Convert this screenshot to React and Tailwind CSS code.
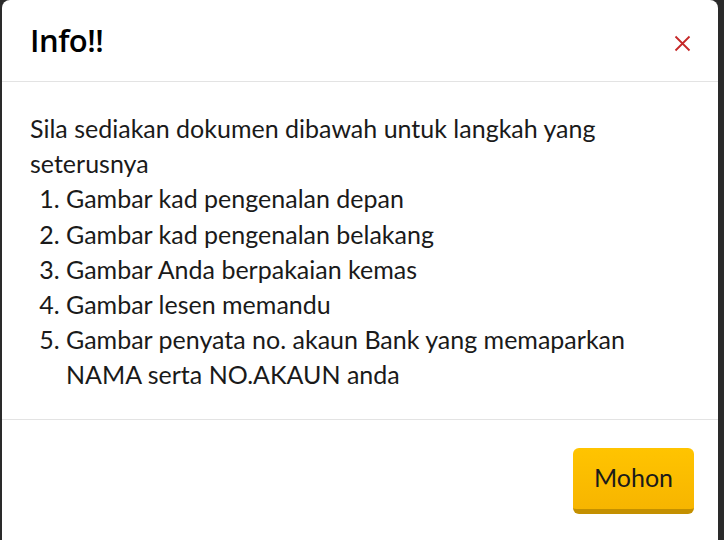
const items = [
  "Gambar kad pengenalan depan",
  "Gambar kad pengenalan belakang",
  "Gambar Anda berpakaian kemas",
  "Gambar lesen memandu",
  "Gambar penyata no. akaun Bank yang memaparkan NAMA serta NO.AKAUN anda",
];

export default function App() {
  return (
    <div className="h-[540px] w-[724px] overflow-hidden bg-[#2a2a2a] pl-[2px] pr-[6px]">
      <div className="h-[560px] rounded-lg bg-white text-[#1a1a1a] font-['Lato',sans-serif]">
        <div className="flex h-[82px] items-center justify-between border-b border-[#e3e3e3] pl-[28px] pr-[27px]">
          <h1 className="font-['Open_Sans',sans-serif] text-[31px] font-semibold tracking-[-0.5px] text-black">
            Info!!
          </h1>
          <button className="mt-[6px] text-[#c62828]">
            <svg width="17" height="17" viewBox="0 0 17 17" fill="none" stroke="currentColor" strokeWidth="1.8">
              <path d="M1.5 1.5L15.5 15.5M15.5 1.5L1.5 15.5" />
            </svg>
          </button>
        </div>
        <div className="border-b border-[#e3e3e3] pl-[28px] pr-6 pt-[29px] text-[25px] leading-[35.2px]">
          <p className="w-[600px]">Sila sediakan dokumen dibawah untuk langkah yang seterusnya</p>
          <ol className="list-decimal pl-[36px] pb-[26px]">
            {items.map((t) => (
              <li key={t}>{t}</li>
            ))}
          </ol>
        </div>
        <div className="flex justify-end pr-[24px] pt-[28px]">
          <button className="h-[66px] w-[121px] rounded-md border-b-[5px] border-[#c49000] bg-gradient-to-b from-[#ffc400] to-[#f7b500] text-[25px] text-[#1a1a1a]">
            Mohon
          </button>
        </div>
      </div>
    </div>
  );
}
